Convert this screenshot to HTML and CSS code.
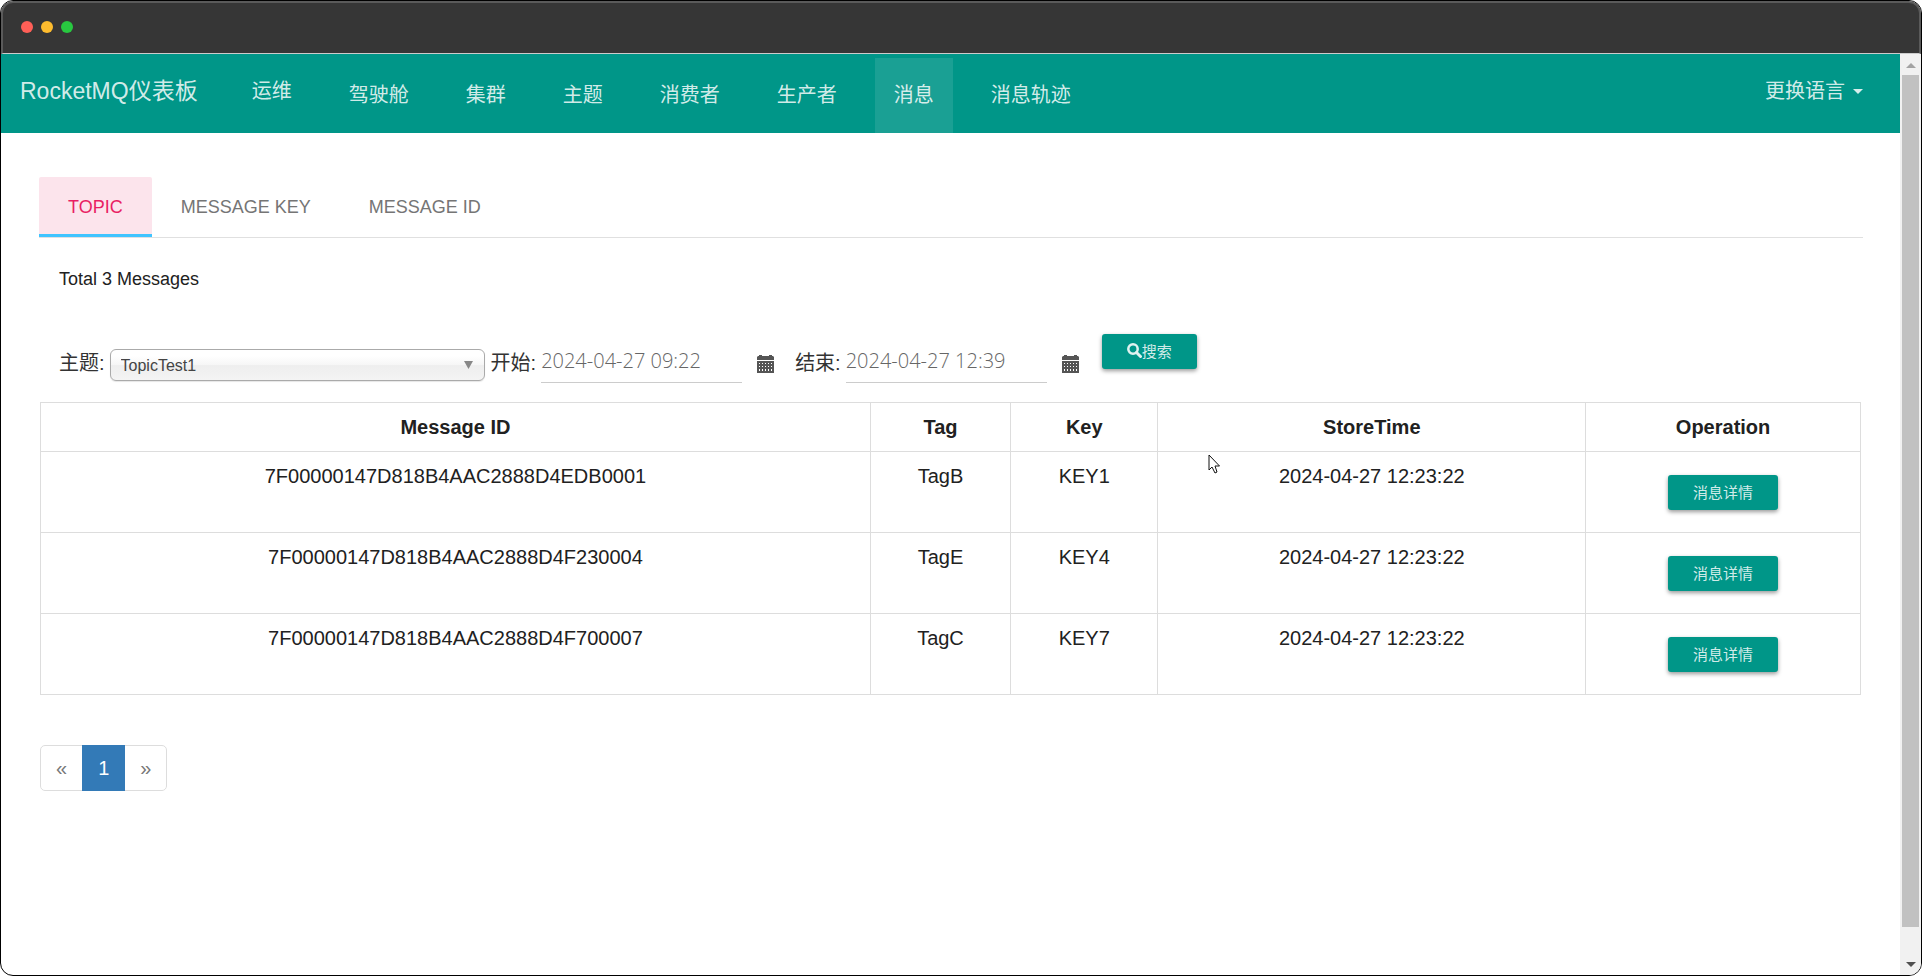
FILE: index.html
```html
<!DOCTYPE html>
<html lang="zh-CN">
<head>
    <meta charset="UTF-8">
    <meta name="viewport" content="width=device-width, initial-scale=1.0">
    <title>RocketMQ仪表板</title>
    <link rel="stylesheet" href="styles.css">
</head>
<body>
    <div class="window">
        <div class="titlebar">
            <span class="dot dot-red"></span>
            <span class="dot dot-yellow"></span>
            <span class="dot dot-green"></span>
        </div>
        <div class="viewport">
            <div class="page">
                <nav class="navbar">
                    <a class="brand" href="#">RocketMQ仪表板</a>
                    <ul class="nav-list">
                        <li class="ops"><a href="#">运维</a></li>
                        <li><a href="#">驾驶舱</a></li>
                        <li><a href="#">集群</a></li>
                        <li><a href="#">主题</a></li>
                        <li><a href="#">消费者</a></li>
                        <li><a href="#">生产者</a></li>
                        <li class="active"><a href="#">消息</a></li>
                        <li><a href="#">消息轨迹</a></li>
                    </ul>
                    <button class="lang" type="button">更换语言<span class="caret"></span></button>
                </nav>

                <main class="content">
                    <div class="tabs" role="tablist">
                        <button class="tab selected" type="button" role="tab" aria-selected="true">TOPIC</button>
                        <button class="tab" type="button" role="tab" aria-selected="false">MESSAGE KEY</button>
                        <button class="tab" type="button" role="tab" aria-selected="false">MESSAGE ID</button>
                    </div>

                    <h5 class="total">Total 3 Messages</h5>

                    <form class="filters">
                        <label for="topic">主题:</label>
                        <div class="topic-select">
                            <select id="topic">
                                <option>TopicTest1</option>
                            </select>
                            <svg width="9" height="8" viewBox="0 0 9 8"><path d="M0 0h9L4.500 8z" fill="#888"/></svg>
                        </div>
                        <label for="begin">开始:</label>
                        <input class="date" id="begin" type="text" value="2024-04-27 09:22">
                        <button class="calendar" type="button" aria-label="开始日期">
                            <svg width="17" height="18" viewBox="0 0 17 18"><path fill="#555" fill-rule="evenodd" d="M0 5V2l1-1h1V0h3v1h7V0h3v1h1l1 1v3zM0 6h17v12H0zM2 8v1h1V8zm3 0v1h1V8zm3 0v1h1V8zm3 0v1h1V8zm3 0v1h1V8zM2 11v1h1v-1zm3 0v1h1v-1zm3 0v1h1v-1zm3 0v1h1v-1zm3 0v1h1v-1zM2 14v2h1v-2zm3 0v2h1v-2zm3 0v2h1v-2zm3 0v2h1v-2zm3 0v2h1v-2z"/></svg>
                        </button>
                        <label for="end">结束:</label>
                        <input class="date" id="end" type="text" value="2024-04-27 12:39">
                        <button class="calendar" type="button" aria-label="结束日期">
                            <svg width="17" height="18" viewBox="0 0 17 18"><path fill="#555" fill-rule="evenodd" d="M0 5V2l1-1h1V0h3v1h7V0h3v1h1l1 1v3zM0 6h17v12H0zM2 8v1h1V8zm3 0v1h1V8zm3 0v1h1V8zm3 0v1h1V8zm3 0v1h1V8zM2 11v1h1v-1zm3 0v1h1v-1zm3 0v1h1v-1zm3 0v1h1v-1zm3 0v1h1v-1zM2 14v2h1v-2zm3 0v2h1v-2zm3 0v2h1v-2zm3 0v2h1v-2zm3 0v2h1v-2z"/></svg>
                        </button>
                        <button class="btn search" type="button">
                            <svg width="15" height="15" viewBox="0 0 15 15" fill="none" stroke="#e0f2f0"><circle cx="6" cy="6" r="4.700" stroke-width="2.500"/><path d="M9.500 9.500l4 4" stroke-width="3" stroke-linecap="round"/></svg>搜索
                        </button>
                    </form>

                    <table class="messages">
                        <thead>
                            <tr>
                                <th class="col-id">Message ID</th>
                                <th class="col-tag">Tag</th>
                                <th class="col-key">Key</th>
                                <th class="col-time">StoreTime</th>
                                <th class="col-op">Operation</th>
                            </tr>
                        </thead>
                        <tbody>
                            <tr>
                                <td>7F00000147D818B4AAC2888D4EDB0001</td>
                                <td>TagB</td>
                                <td>KEY1</td>
                                <td>2024-04-27 12:23:22</td>
                                <td><button class="btn detail" type="button">消息详情</button></td>
                            </tr>
                            <tr>
                                <td>7F00000147D818B4AAC2888D4F230004</td>
                                <td>TagE</td>
                                <td>KEY4</td>
                                <td>2024-04-27 12:23:22</td>
                                <td><button class="btn detail" type="button">消息详情</button></td>
                            </tr>
                            <tr>
                                <td>7F00000147D818B4AAC2888D4F700007</td>
                                <td>TagC</td>
                                <td>KEY7</td>
                                <td>2024-04-27 12:23:22</td>
                                <td><button class="btn detail" type="button">消息详情</button></td>
                            </tr>
                        </tbody>
                    </table>

                    <ul class="pagination">
                        <li><a href="#">«</a></li>
                        <li class="active"><a href="#">1</a></li>
                        <li><a href="#">»</a></li>
                    </ul>
                </main>
            </div>
            <div class="scrollbar">
                <svg width="10" height="5" viewBox="0 0 10 5"><path d="M0 5h10L5 0z" fill="#a3a3a3"/></svg>
                <div class="thumb"></div>
                <svg width="10" height="5" viewBox="0 0 10 5"><path d="M0 0h10L5 5z" fill="#505050"/></svg>
            </div>
        </div>
        <svg class="pointer" width="13" height="20" viewBox="0 0 13 20"><path d="M1 1v15l3-3 3 6 2-1-2-6h4.500z" fill="#fff" stroke="#111"/></svg>
    </div>
</body>
</html>
```
FILE: styles.css
```css
* {
    box-sizing: border-box;
}
body {
    margin: 0;
    background-color: #fff;
    color: #212121;
    font-family: "Liberation Sans", "Noto Sans CJK SC", sans-serif;
    font-size: 20px;
    line-height: 28px;
}
button, input, select {
    font-family: inherit;
}
a {
    text-decoration: none;
}
.window {
    position: relative;
    display: flex;
    flex-direction: column;
    min-height: 100vh;
    border: 1px solid #000;
    border-radius: 13px;
    overflow: hidden;
}
.titlebar {
    display: flex;
    align-items: center;
    gap: 8px;
    height: 53px;
    padding: 0 0 2px 18px;
    background-color: #363636;
    border: 2px solid #5a5a5a;
    border-bottom: 1px solid #ccc;
    border-radius: 12px 12px 0 0;
}
.dot {
    width: 12px;
    height: 12px;
    border-radius: 50%;
}
.dot-red {
    background-color: #ff5f57;
}
.dot-yellow {
    background-color: #febc2e;
}
.dot-green {
    background-color: #28c840;
}
.viewport {
    display: flex;
    flex: 1;
}
.page {
    flex: 1;
}

/* top navigation */
.navbar {
    display: flex;
    align-items: flex-start;
    padding: 0 37px 0 19px;
    background-color: #009688;
}
.brand, .nav-list a, .lang {
    color: rgba(255, 255, 255, 0.84);
    line-height: 75px;
}
.brand {
    font-size: 23px;
}
.nav-list {
    display: flex;
    gap: 19px;
    margin: 0 auto 0 35px;
    padding: 0;
    list-style: none;
}
.nav-list li {
    margin-top: 4px;
}
.nav-list .ops {
    margin-top: 0;
}
.nav-list a {
    display: block;
    padding: 0 19px;
}
.nav-list .active {
    background-color: rgba(255, 255, 255, 0.1);
}
.lang {
    display: flex;
    align-items: center;
    gap: 8px;
    padding: 0;
    background: none;
    border: 0;
    font-size: 20px;
}
.caret {
    border-top: 5px solid;
    border-left: 5px solid transparent;
    border-right: 5px solid transparent;
}

.content {
    padding: 44px 37px 20px 38px;
}
.tabs {
    display: flex;
    border-bottom: 1px solid #e0e0e0;
}
.tab {
    height: 60px;
    padding: 0 29px;
    background: none;
    border: 0;
    color: #757575;
    font-size: 18px;
}
.tab.selected {
    background-color: #fce4ec;
    border-radius: 2px 2px 0 0;
    box-shadow: inset 0 -3px #40c4ff;
    color: #e91e63;
}
.total {
    margin: 27px 20px 41px;
    font-size: 18px;
    font-weight: normal;
}

/* search form */
.filters {
    display: flex;
    align-items: flex-end;
    padding: 0 20px;
    margin-bottom: 19px;
}
.filters label {
    margin-bottom: 6px;
    color: #333;
}
.topic-select {
    position: relative;
    width: 375px;
    margin: 0 6px 2px 5px;
}
.topic-select select {
    display: block;
    width: 100%;
    height: 32px;
    padding: 0 10px;
    appearance: none;
    background: linear-gradient(#fff 20%, #f6f6f6 50%, #eee 52%, #f4f4f4);
    border: 1px solid #aaa;
    border-radius: 6px;
    box-shadow: 0 1px 1px rgba(0, 0, 0, 0.1);
    color: #444;
    font-size: 16px;
}
.topic-select svg {
    position: absolute;
    top: 12px;
    right: 12px;
}
.date {
    width: 201px;
    height: 44px;
    margin-left: 5px;
    padding: 0;
    background: none;
    border: 0;
    border-bottom: 1px solid #ccc;
    color: #666;
    font-family: "Open Sans", "Noto Sans", sans-serif;
    font-size: 20px;
    font-weight: 300;
}
.calendar {
    display: flex;
    margin: 0 21px 10px 15px;
    padding: 0;
    background: none;
    border: 0;
}
.btn {
    height: 35px;
    padding: 0 25px 2px;
    background-color: #009688;
    border: 0;
    border-radius: 3px;
    box-shadow: 0 2px 4px rgba(0, 0, 0, 0.4);
    color: rgba(255, 255, 255, 0.84);
    font-size: 15px;
}
.search {
    display: flex;
    align-items: center;
    margin: 0 0 14px 2px;
}

.messages {
    width: calc(100% - 3px);
    margin-left: 1px;
    border-collapse: collapse;
    table-layout: fixed;
    text-align: center;
}
.messages th, .messages td {
    padding: 10px;
    border: 1px solid #ddd;
    vertical-align: top;
}
.col-id {
    width: 45.6%;
}
.col-tag {
    width: 7.7%;
}
.col-key {
    width: 8.1%;
}
.col-time {
    width: 23.5%;
}
.col-op {
    width: 15.1%;
}
.detail {
    display: block;
    margin: 13px auto 12px;
}

.pagination {
    display: flex;
    width: max-content;
    margin: 50px 1px 0;
    padding: 0;
    list-style: none;
    border: 1px solid #ddd;
    border-radius: 5px;
}
.pagination a {
    display: block;
    padding: 8px 15px;
    color: #777;
}
.pagination .active {
    margin: -1px 0;
    background-color: #337ab7;
}
.pagination .active a {
    padding: 9px 16px;
    color: #fff;
}

.scrollbar {
    display: flex;
    flex-direction: column;
    align-items: center;
    width: 21px;
    padding: 9px 2px 8px;
    background-color: #f1f1f1;
}
.thumb {
    flex: 1;
    width: 100%;
    margin: 7px 0 35px;
    background-color: #c1c1c1;
}
.pointer {
    position: absolute;
    top: 453px;
    left: 1207px;
}
```
